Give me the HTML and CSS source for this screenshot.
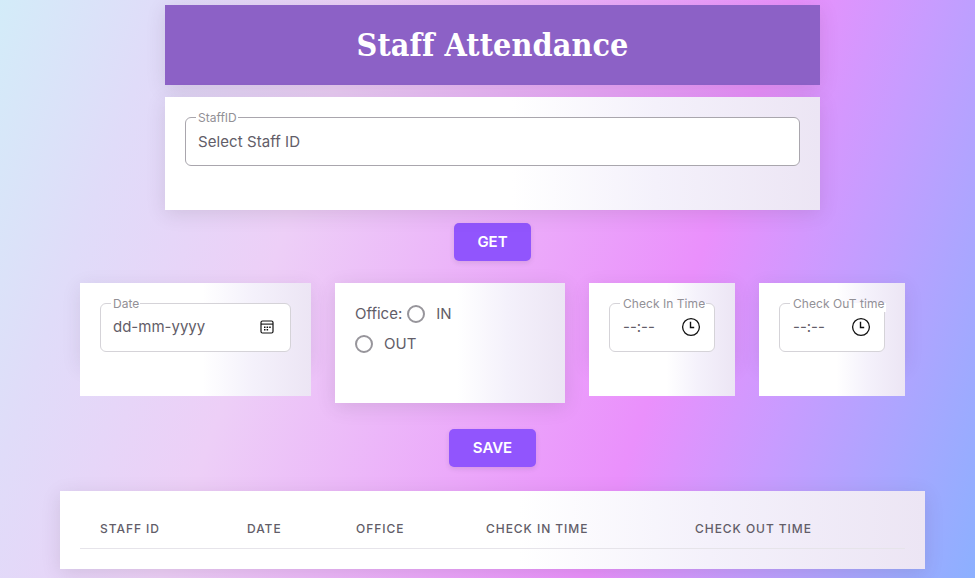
FILE: index.html
```html
<!DOCTYPE html>
<html lang="en">
<head>
<meta charset="utf-8">
<title>Staff Attendance</title>
<link rel="stylesheet" href="styles.css">
</head>
<body>
<main class="page">
  <header class="banner"><h1>Staff Attendance</h1></header>

  <section class="card card-staff">
    <div class="field field-dark">
      <span class="label">StaffID</span>
      <span class="value value-staff">Select Staff ID</span>
    </div>
  </section>

  <button class="btn btn-get" type="button">GET</button>

  <section class="row">
    <div class="card card-short card-date">
      <div class="field">
        <span class="label">Date</span>
        <span class="value">dd-mm-yyyy</span>
        <svg class="icon-cal" width="14" height="14" viewBox="0 0 14 14" fill="none" stroke="#111">
          <rect x="1" y="1" width="12" height="12" rx="1.5" stroke-width="1.2"/>
          <path d="M1 4.1h12" stroke-width="1.1"/>
          <path d="M4 7.2h7M4 9.8h4.5" stroke-width="1.4" stroke-dasharray="1.5 1.1"/>
        </svg>
      </div>
    </div>
    <div class="card card-office">
      <div class="option"><span>Office:</span><i class="radio"></i><span class="choice">IN</span></div>
      <div class="option"><i class="radio radio-first"></i><span class="choice">OUT</span></div>
    </div>
    <div class="card card-short card-time">
      <div class="field">
        <span class="label">Check In Time</span>
        <span class="value value-time">--:--</span>
        <svg class="icon-clock" width="20" height="20" viewBox="0 0 20 20" fill="none" stroke="#111">
          <circle cx="10" cy="10" r="8.4" stroke-width="1.3"/>
          <path d="M9.5 4.7v5.8h3.7" stroke-width="1.4"/>
        </svg>
      </div>
    </div>
    <div class="card card-short card-time">
      <div class="field">
        <span class="label">Check OuT time</span>
        <span class="value value-time">--:--</span>
        <svg class="icon-clock" width="20" height="20" viewBox="0 0 20 20" fill="none" stroke="#111">
          <circle cx="10" cy="10" r="8.4" stroke-width="1.3"/>
          <path d="M9.5 4.7v5.8h3.7" stroke-width="1.4"/>
        </svg>
      </div>
    </div>
  </section>

  <button class="btn btn-save" type="button">SAVE</button>

  <section class="card card-table">
    <table>
      <thead>
        <tr><th class="c1">Staff ID</th><th class="c2">Date</th><th class="c3">Office</th><th class="c4">Check In Time</th><th>Check Out Time</th></tr>
      </thead>
    </table>
  </section>
</main>
</body>
</html>
```
FILE: styles.css
```css
* { box-sizing: border-box; }
html { height: 100%; }
body {
  margin: 0;
  height: 578px;
  overflow: hidden;
  font-family: Inter, "Liberation Sans", sans-serif;
  font-size: 15px;
  color: #625d68;
  background: linear-gradient(109.6deg, #d3ecf9 0%, #e0dcf9 14%, #edcff7 31%, #ea90fc 67%, #c89cff 79%, #8cb0ff 100%);
}
.page {
  display: flex;
  flex-direction: column;
  align-items: center;
  isolation: isolate;
  width: 865px;
  margin-left: 60px;
  padding-top: 5px;
}
.banner {
  display: flex;
  align-items: center;
  justify-content: center;
  width: 655px;
  height: 80px;
  background: #8c61c6;
  box-shadow: 0 4px 18px rgba(58, 53, 65, .13);
}
h1 {
  margin: 0;
  font: bold 32px/40px "DejaVu Serif Condensed", "DejaVu Serif", serif;
  letter-spacing: .08px;
  color: #fff;
  white-space: nowrap;
}
.card {
  position: relative;
  background: linear-gradient(90deg, #fff 0%, #fff 53%, #f4f1fb 75%, #ece5f4 100%);
  padding: 20px;
  box-shadow: 0 4px 18px rgba(58, 53, 65, .13);
}
.card-staff { width: 655px; height: 113px; margin-top: 12px; }
.card-short { box-shadow: none; }
.card-short::before {
  content: "";
  position: absolute;
  inset: 0 0 32px;
  z-index: -1;
  box-shadow: 0 4px 18px rgba(58, 53, 65, .1);
}
.field {
  position: relative;
  display: flex;
  justify-content: space-between;
  height: 49px;
  border: 1px solid #d5d3d8;
  border-radius: 6px;
  background: #fff;
  padding: 13px 12px 0;
  line-height: 20px;
}
.field-dark { border-color: #a9a6ad; padding-top: 14px; }
.label {
  position: absolute;
  left: 10px;
  top: -8px;
  padding: 0 1px 0 2px;
  font-size: 12px;
  line-height: 16px;
  color: #929096;
  background: linear-gradient(transparent 7px, #fff 7px);
  white-space: nowrap;
}
.card-time .label { padding-left: 3px; letter-spacing: .05px; }
.btn {
  height: 38px;
  padding: 0;
  border: 0;
  border-radius: 5px;
  background: #9155fd;
  color: #fff;
  font: 600 15px/38px Inter, sans-serif;
  box-shadow: 0 2px 5px rgba(58, 53, 65, .12);
}
.btn-get { width: 77px; margin-top: 13px; }
.btn-save { width: 87px; margin-top: 26px; }
.row {
  display: flex;
  align-items: flex-start;
  gap: 24px;
  width: 825px;
  margin-top: 22px;
}
.row .card { height: 113px; }
.row .card-date { width: 231px; }
.row .card-office { width: 230px; height: 120px; padding-top: 16px; }
.row .card-time { width: 146px; }
.value-staff { letter-spacing: .07px; }
.value-time { padding-left: 1px; }
.icon-cal { margin: 3px 4px 0 0; }
.icon-clock { margin-right: 1px; }
.option { display: flex; align-items: center; height: 30px; }
.option span { position: relative; top: -1px; }
.radio {
  width: 18px;
  height: 18px;
  margin-left: 5px;
  border: 2px solid #97959b;
  border-radius: 50%;
  background: #fff;
}
.radio-first { margin-left: 0; }
.choice { margin-left: 11px; }
.card-table { width: 865px; height: 78px; margin-top: 24px; }
table { width: 825px; table-layout: fixed; border-collapse: collapse; }
th {
  height: 37px;
  padding: 0 0 1px 20px;
  border-bottom: 1px solid #e6e4ea;
  font-size: 12px;
  font-weight: 500;
  letter-spacing: .95px;
  text-align: left;
  text-transform: uppercase;
  white-space: nowrap;
}
.c1 { width: 147px; }
.c2 { width: 109px; }
.c3 { width: 130px; }
.c4 { width: 209px; }
```
